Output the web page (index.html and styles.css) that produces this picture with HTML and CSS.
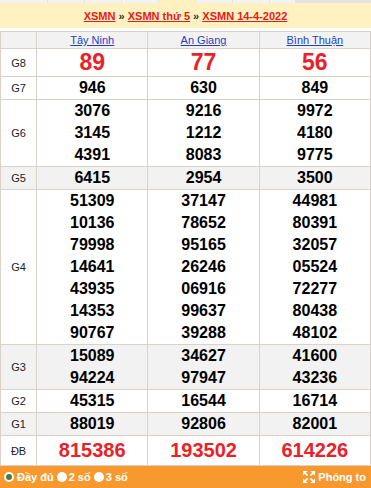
FILE: index.html
```html
<!DOCTYPE html>
<html lang="vi">
<head>
    <meta charset="UTF-8">
    <meta name="viewport" content="width=device-width, initial-scale=1.0">
    <title>XSMN 14-4-2022</title>
    <link rel="stylesheet" href="styles.css">
</head>
<body>
    <!-- Thanh tab phía trên -->
    <div class="tabs">
        <span class="tab t1"></span>
        <span class="tab t2"></span>
        <span class="tab t2"></span>
        <span class="tab t2"></span>
        <span class="tab active"></span>
        <span class="tab t2"></span>
        <span class="tab t2"></span>
        <span class="tab t3"></span>
        <span class="tab rest"></span>
    </div>

    <div class="title-bar">
        <a href="#">XSMN</a> » <a href="#">XSMN thứ 5</a> » <a href="#">XSMN 14-4-2022</a>
    </div>

    <table class="kqxs">
        <colgroup>
            <col class="c-label">
            <col class="c-prov">
            <col class="c-prov">
            <col class="c-prov">
        </colgroup>
        <tr class="head">
            <th></th>
            <th><a href="#">Tây Ninh</a></th>
            <th><a href="#">An Giang</a></th>
            <th><a href="#">Bình Thuận</a></th>
        </tr>
        <tr class="g8">
            <td class="lbl">G8</td>
            <td><b>89</b></td>
            <td><b>77</b></td>
            <td><b>56</b></td>
        </tr>
        <tr>
            <td class="lbl">G7</td>
            <td><b>946</b></td>
            <td><b>630</b></td>
            <td><b>849</b></td>
        </tr>
        <tr>
            <td class="lbl">G6</td>
            <td><b>3076</b><b>3145</b><b>4391</b></td>
            <td><b>9216</b><b>1212</b><b>8083</b></td>
            <td><b>9972</b><b>4180</b><b>9775</b></td>
        </tr>
        <tr class="alt">
            <td class="lbl">G5</td>
            <td><b>6415</b></td>
            <td><b>2954</b></td>
            <td><b>3500</b></td>
        </tr>
        <tr>
            <td class="lbl">G4</td>
            <td><b>51309</b><b>10136</b><b>79998</b><b>14641</b><b>43935</b><b>14353</b><b>90767</b></td>
            <td><b>37147</b><b>78652</b><b>95165</b><b>26246</b><b>06916</b><b>99637</b><b>39288</b></td>
            <td><b>44981</b><b>80391</b><b>32057</b><b>05524</b><b>72277</b><b>80438</b><b>48102</b></td>
        </tr>
        <tr class="alt">
            <td class="lbl">G3</td>
            <td><b>15089</b><b>94224</b></td>
            <td><b>34627</b><b>97947</b></td>
            <td><b>41600</b><b>43236</b></td>
        </tr>
        <tr>
            <td class="lbl">G2</td>
            <td><b>45315</b></td>
            <td><b>16544</b></td>
            <td><b>16714</b></td>
        </tr>
        <tr class="alt">
            <td class="lbl">G1</td>
            <td><b>88019</b></td>
            <td><b>92806</b></td>
            <td><b>82001</b></td>
        </tr>
        <tr class="db">
            <td class="lbl">ĐB</td>
            <td><b>815386</b></td>
            <td><b>193502</b></td>
            <td><b>614226</b></td>
        </tr>
    </table>

    <!-- Thanh chọn kiểu hiển thị -->
    <div class="footer">
        <div class="opts">
            <label class="opt"><span class="radio checked"></span>Đầy đủ</label>
            <label class="opt"><span class="radio"></span>2 số</label>
            <label class="opt"><span class="radio"></span>3 số</label>
        </div>
        <div class="zoom">
            <svg width="12" height="12" viewBox="0 0 13 13">
                <g fill="none" stroke="#fff" stroke-width="2">
                    <path d="M1 1L5 5M12 1L8 5M1 12L5 8M12 12L8 8"/>
                </g>
                <g fill="#fff">
                    <path d="M0 0H5L0 5Z"/>
                    <path d="M13 0H8L13 5Z"/>
                    <path d="M0 13H5L0 8Z"/>
                    <path d="M13 13H8L13 8Z"/>
                </g>
            </svg>
            Phóng to
        </div>
    </div>
</body>
</html>
```

FILE: styles.css
```css
body {
    margin: 0;
    font-family: "Liberation Sans", Arial, sans-serif;
    background: #fff;
}

/* Thanh tab */
.tabs {
    display: flex;
    height: 3px;
}

.tab {
    background: #f3f3f3;
    border-right: 1px solid #e4e4e4;
}

.t1 { width: 47px; }
.t2 { width: 36px; }
.t3 { width: 25px; }

.active {
    width: 36px;
    background: #fff2c0;
}

.rest {
    flex: 1;
    background: #e2e2e2;
    border-right: none;
}

/* Tiêu đề */
.title-bar {
    background: #fff2c0;
    height: 25px;
    line-height: 26px;
    text-align: center;
    font-size: 11px;
    font-weight: bold;
    color: #333;
    margin-bottom: 3px;
}

.title-bar a {
    color: #e31b1b;
    text-decoration: underline;
}

/* Bảng kết quả */
.kqxs {
    width: 371px;
    border-collapse: collapse;
    table-layout: fixed;
    border: 1px solid #d8d2cb;
}

.c-label { width: 36px; }
.c-prov { width: 111px; }

.kqxs th,
.kqxs td {
    border: 1px solid #d8d2cb;
    padding: 0;
    text-align: center;
    vertical-align: middle;
}

.head th {
    background: #f2f2f2;
    height: 16px;
    font-weight: normal;
    font-size: 11px;
}

.head a {
    color: #1f3fbf;
}

.lbl {
    font-size: 11px;
    color: #222;
}

.kqxs td b {
    display: block;
    line-height: 22px;
    font-size: 16px;
    color: #000;
}

.alt td {
    background: #f2f2f2;
}

.g8 td b {
    line-height: 27px;
    font-size: 23px;
    color: #ea2128;
}

.db td b {
    line-height: 29px;
    font-size: 20px;
    color: #ea2128;
}

/* Thanh dưới */
.footer {
    display: flex;
    justify-content: space-between;
    align-items: center;
    height: 22px;
    background: #f7992f;
    color: #fff;
    font-size: 11px;
    font-weight: bold;
    padding: 0 5px 0 4px;
}

.opts {
    display: flex;
    gap: 3px;
}

.opt {
    display: flex;
    align-items: center;
}

.radio {
    width: 10px;
    height: 10px;
    border-radius: 50%;
    background: #fff;
    margin-right: 2px;
}

.radio.checked {
    box-sizing: border-box;
    background: #4d7a46;
    border: 2px solid #fff;
    margin-right: 3px;
}

.zoom {
    display: flex;
    align-items: center;
    gap: 3px;
}
```
